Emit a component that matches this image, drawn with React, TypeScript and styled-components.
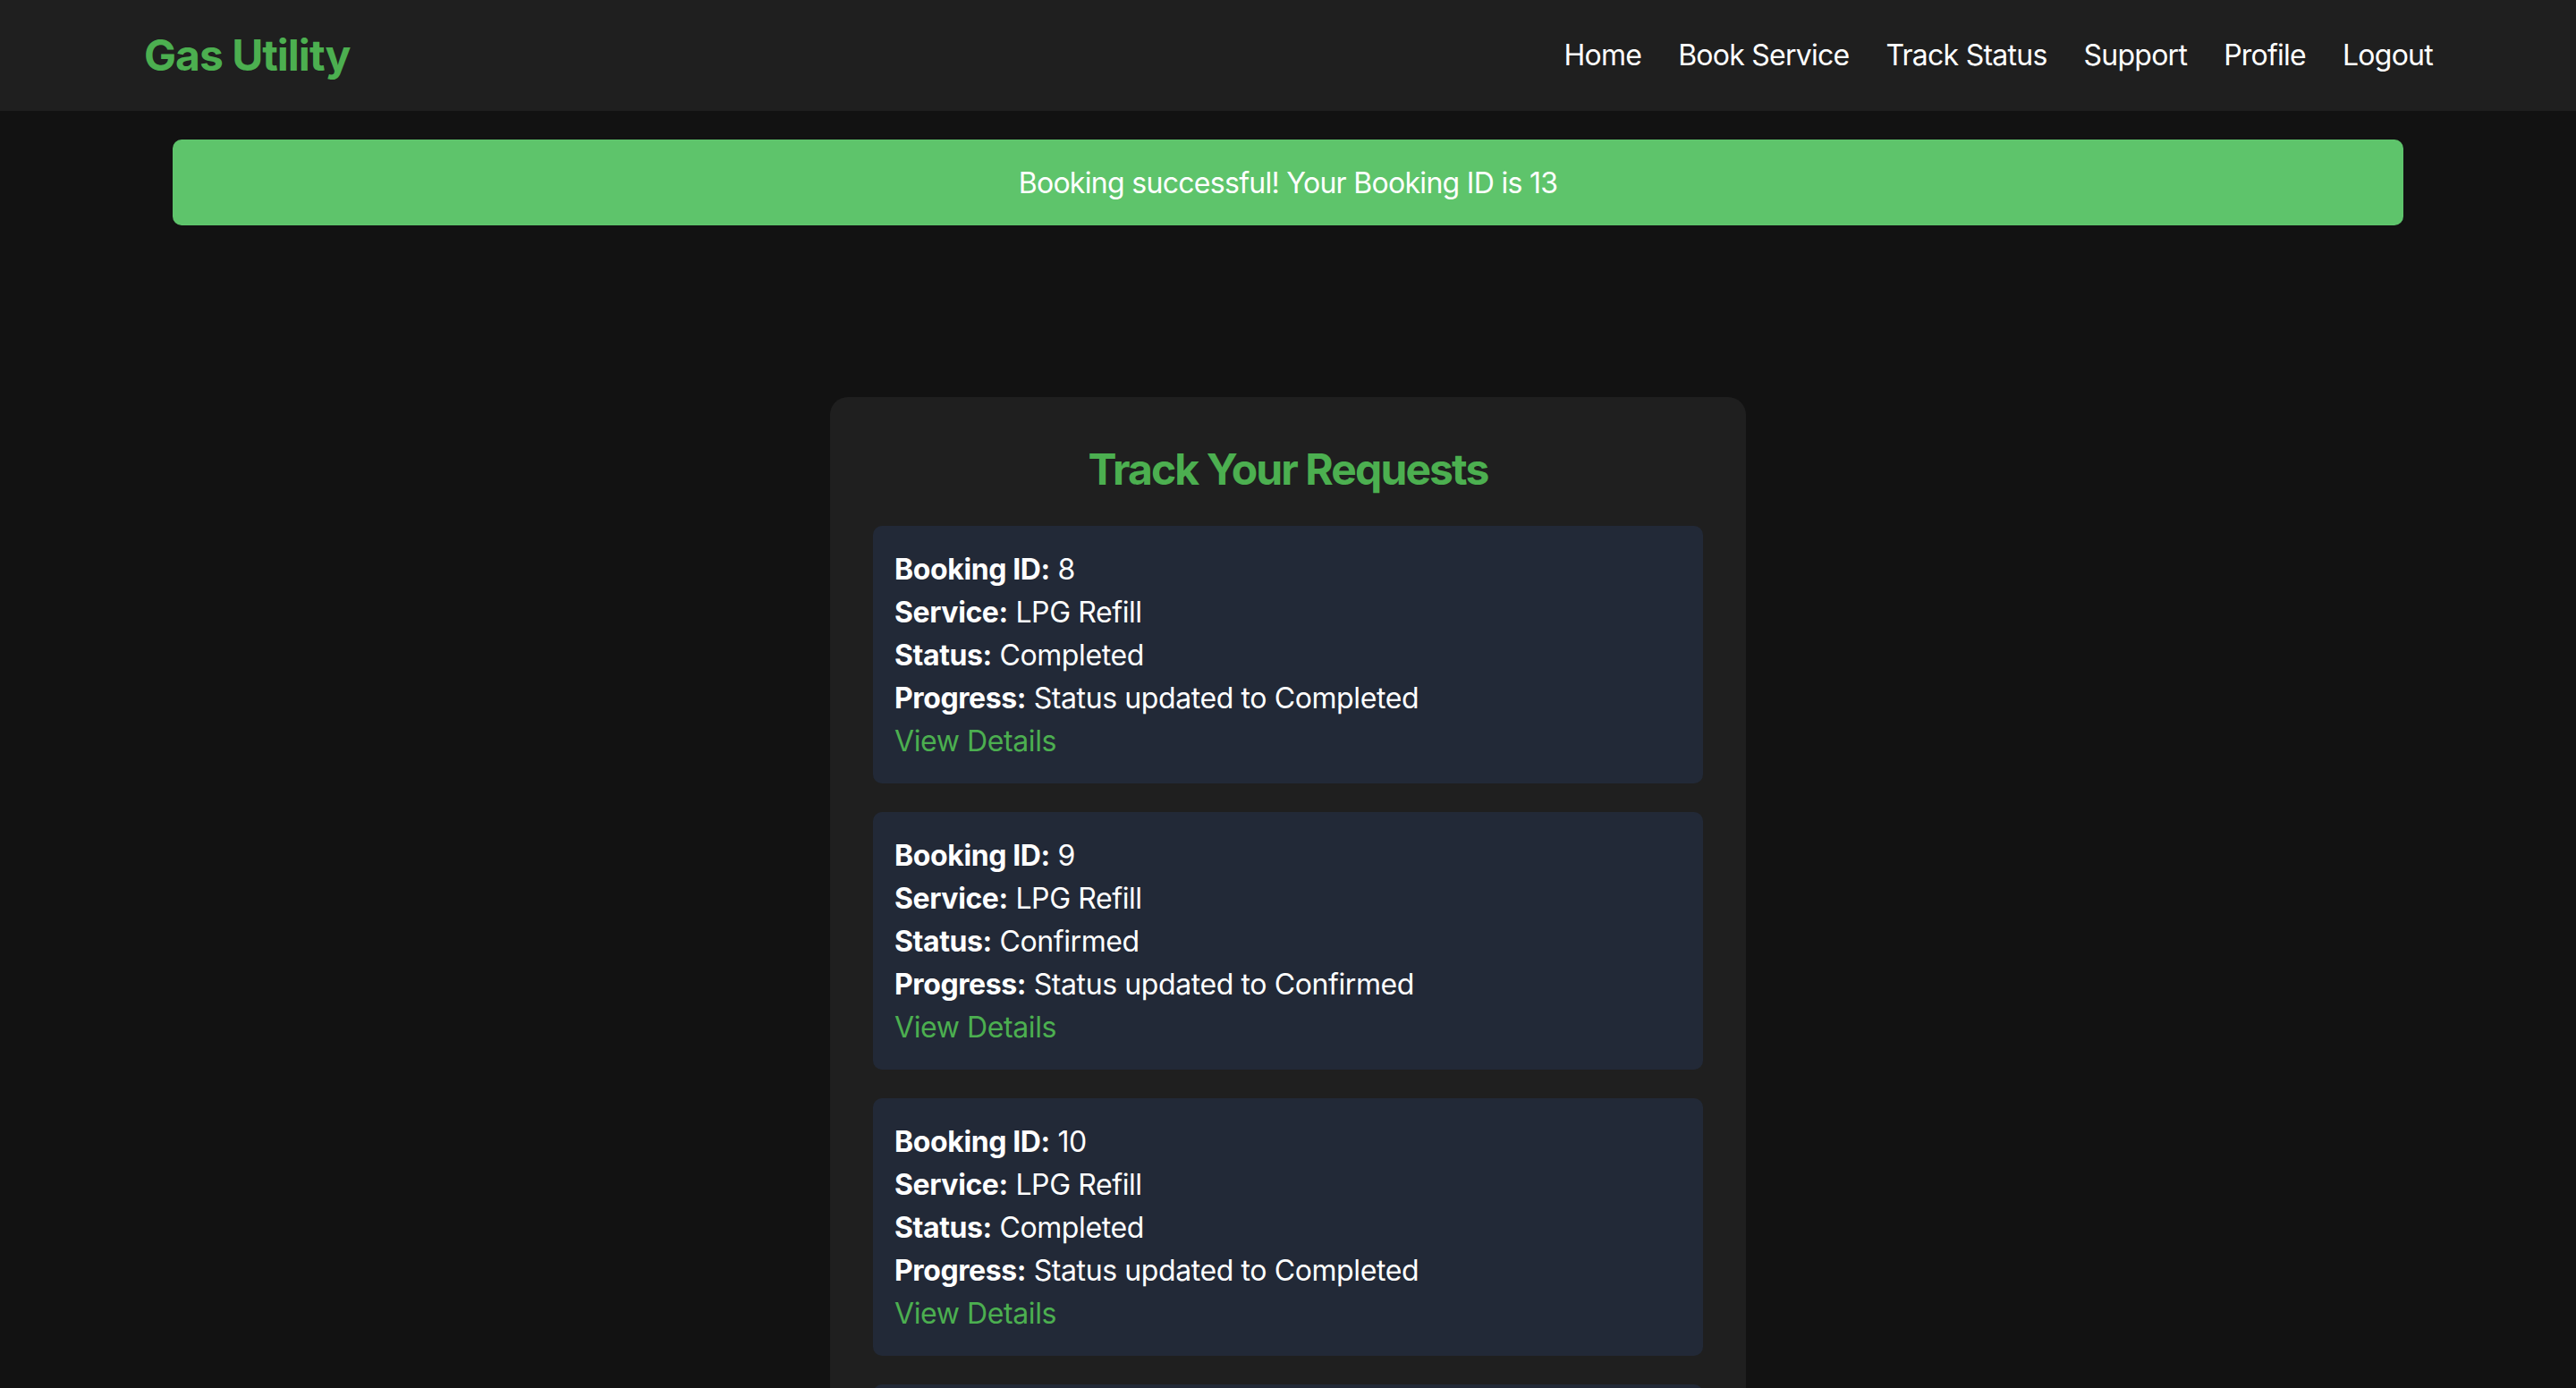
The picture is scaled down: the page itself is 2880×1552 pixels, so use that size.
import React from "react";
import styled, { createGlobalStyle } from "styled-components";

const GlobalStyle = createGlobalStyle`
  html, body {
    margin: 0;
    padding: 0;
    background: #121212;
    color: #ffffff;
    font-family: Inter, "Noto Sans", "Liberation Sans", sans-serif;
  }
  * { box-sizing: border-box; }
`;

const Header = styled.header`
  height: 124px;
  padding: 0 160px 2px 161px;
  background: #1f1f1f;
  display: flex;
  align-items: center;
  justify-content: space-between;
`;

const Logo = styled.div`
  font-size: 48px;
  font-weight: 700;
  color: #4caf50;
  letter-spacing: -1px;
`;

const Nav = styled.nav`
  display: flex;
  align-items: center;
  gap: 41px;
`;

const NavLink = styled.a`
  font-size: 32px;
  color: #ffffff;
  text-decoration: none;
  letter-spacing: -0.75px;
`;

const Banner = styled.div`
  margin: 32px 193px 0;
  height: 96px;
  border-radius: 10px;
  background: #5ec46b;
  color: #ffffff;
  font-size: 32px;
  display: flex;
  align-items: center;
  justify-content: center;
  letter-spacing: -0.7px;
`;

const Main = styled.main`
  padding-top: 192px;
  display: flex;
  justify-content: center;
`;

const Card = styled.section`
  width: 1024px;
  padding: 52px 48px 48px;
  background: #1f1f1f;
  border-radius: 20px;
`;

const Title = styled.h2`
  margin: 0 0 34px;
  font-size: 48px;
  line-height: 1.2;
  font-weight: 700;
  color: #4caf50;
  text-align: center;
  letter-spacing: -1.9px;
`;

const List = styled.div`
  display: flex;
  flex-direction: column;
  gap: 32px;
`;

const Item = styled.article`
  padding: 25px 24px 23px;
  border-radius: 10px;
  background: #222937;
  font-size: 32px;
  line-height: 48px;
  letter-spacing: -0.4px;
`;

const Line = styled.div`
  color: #ffffff;
`;

const Label = styled.strong`
  font-weight: 700;
`;

const DetailsLink = styled.a`
  display: block;
  color: #4caf50;
  text-decoration: none;
`;

type Booking = { id: number; service: string; status: string };

const bookings: Booking[] = [
  { id: 8, service: "LPG Refill", status: "Completed" },
  { id: 9, service: "LPG Refill", status: "Confirmed" },
  { id: 10, service: "LPG Refill", status: "Completed" },
  { id: 11, service: "LPG Refill", status: "Pending" },
];

const navItems = ["Home", "Book Service", "Track Status", "Support", "Profile", "Logout"];

export default function App() {
  return (
    <>
      <GlobalStyle />
      <Header>
        <Logo>Gas Utility</Logo>
        <Nav>
          {navItems.map((n) => (
            <NavLink key={n} href="#">
              {n}
            </NavLink>
          ))}
        </Nav>
      </Header>
      <Banner>Booking successful! Your Booking ID is 13</Banner>
      <Main>
        <Card>
          <Title>Track Your Requests</Title>
          <List>
            {bookings.map((b) => (
              <Item key={b.id}>
                <Line>
                  <Label>Booking ID:</Label> {b.id}
                </Line>
                <Line>
                  <Label>Service:</Label> {b.service}
                </Line>
                <Line>
                  <Label>Status:</Label> {b.status}
                </Line>
                <Line>
                  <Label>Progress:</Label> Status updated to {b.status}
                </Line>
                <DetailsLink href="#">View Details</DetailsLink>
              </Item>
            ))}
          </List>
        </Card>
      </Main>
    </>
  );
}
